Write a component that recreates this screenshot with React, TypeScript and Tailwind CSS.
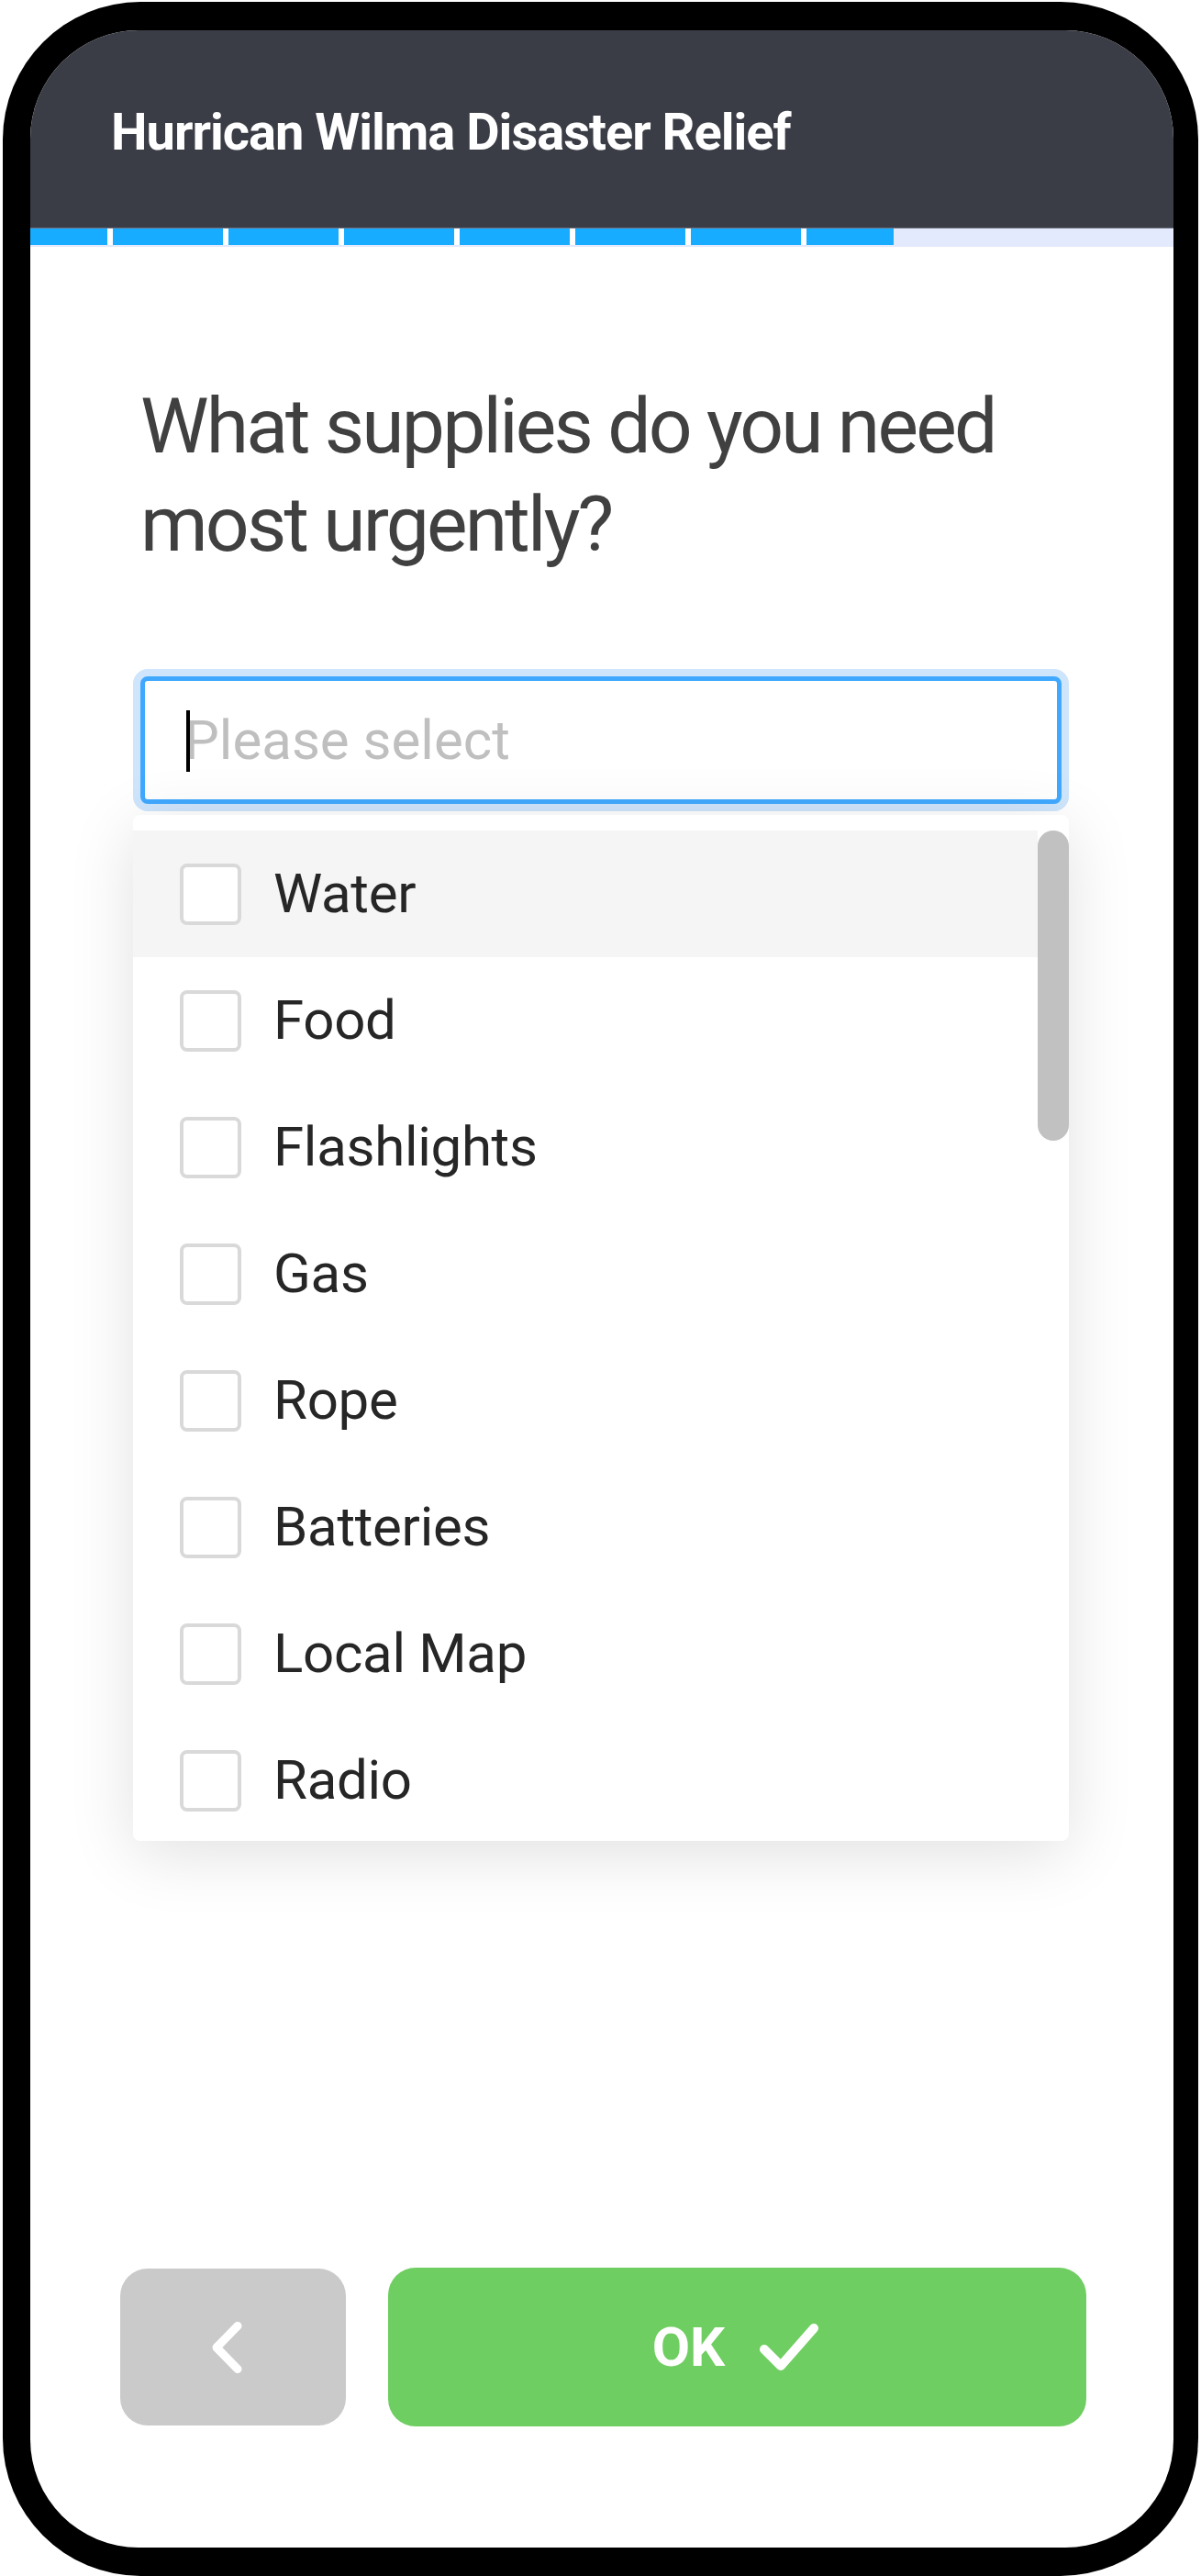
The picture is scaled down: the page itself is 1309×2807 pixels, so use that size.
import React from 'react';

const supplies = ['Water', 'Food', 'Flashlights', 'Gas', 'Rope', 'Batteries', 'Local Map', 'Radio'];

// progress segments: widths of the filled blue pieces, split by white ticks
const segments = [84, 120, 120, 120, 120, 120, 120, 95];

function ChevronLeft() {
  return (
    <svg width="40" height="60" viewBox="0 0 40 60" className="mr-[10px]">
      <path d="M30 6.5 L7 30 L30 53.5" fill="none" stroke="#ffffff" strokeWidth="9" strokeLinecap="round" strokeLinejoin="round" />
    </svg>
  );
}

function CheckMark() {
  return (
    <svg width="72" height="60" viewBox="0 0 72 60">
      <path d="M9 32 L27 50 L63 9" fill="none" stroke="#ffffff" strokeWidth="10" strokeLinecap="round" strokeLinejoin="round" />
    </svg>
  );
}

export default function App() {
  return (
    <div className="w-[1309px] h-[2807px] bg-white pt-[2px] pl-[3px] pr-[3px] font-['Roboto',sans-serif]">
      {/* Phone frame */}
      <div className="h-[2805px] bg-black rounded-[150px] pt-[31px] pb-[31px] pl-[30px] pr-[27px]">
        <div className="h-full bg-white rounded-[118px] overflow-hidden flex flex-col">

          {/* Header */}
          <div className="h-[215px] bg-[#3b3d46] pl-[88px] pt-[78px] shrink-0">
            <h1 className="text-[56px] leading-[66px] font-bold text-white tracking-[-1px]">Hurrican Wilma Disaster Relief</h1>
          </div>

          {/* Progress bar */}
          <div className="h-[21px] bg-[#e4eafd] shrink-0 border-t border-[#6f7481]">
            <div className="flex gap-[6px] bg-white w-[941px] h-[18px]">
              {segments.map((w, i) => (
                <div key={i} className="h-full bg-[#17acff]" style={{ width: w }} />
              ))}
            </div>
          </div>

          {/* Question body */}
          <div className="flex-1 pl-[120px] pr-[122px] pt-[142px]">
            <h2 className="text-[84px] leading-[107px] text-[#404040] font-normal tracking-[-2.8px]">
              What supplies do you need most urgently?
            </h2>

            <div className="mt-[112px] h-[139px] bg-white border-[5px] border-[#40a9ff] rounded-[8px] shadow-[0_0_0_8px_#cfe5fc] flex items-center pl-[43px]">
              <span className="relative text-[60px] leading-[70px] text-[#bfbfbf]">
                <span className="absolute left-[2px] top-[2px] w-[4px] h-[67px] bg-black" />
                Please select
              </span>
            </div>

            {/* Dropdown */}
            <div className="mt-[12px] -mx-[8px] h-[1118px] bg-white rounded-[8px] shadow-[0_14px_72px_rgba(0,0,0,0.12)] pt-[17px] overflow-hidden">
              <div className="flex h-full">
                <div className="flex-1">
                  {supplies.map((s, i) => (
                    <div
                      key={s}
                      className={`h-[138px] flex items-center pl-[51px] gap-[35px] ${i === 0 ? 'bg-[#f5f5f5]' : 'bg-white'}`}
                    >
                      <span className="w-[67px] h-[67px] rounded-[8px] border-[4px] border-[#d9d9d9] bg-white shrink-0" />
                      <span className="text-[60px] leading-[70px] text-[#262626] tracking-[-0.3px]">{s}</span>
                    </div>
                  ))}
                </div>
                <div className="w-[34px] shrink-0">
                  <div className="h-[338px] rounded-full bg-[#c1c1c1]" />
                </div>
              </div>
            </div>
          </div>

          {/* Navigation buttons */}
          <div className="flex items-center gap-[46px] pl-[98px] pr-[95px] mb-[132px] shrink-0">
            <button className="w-[246px] h-[171px] rounded-[30px] bg-[#cacaca] flex items-center justify-center">
              <ChevronLeft />
            </button>
            <button className="flex-1 h-[173px] rounded-[30px] bg-[#6fce61] flex items-center justify-center gap-[34px]">
              <span className="text-[60px] leading-[70px] font-bold text-white">OK</span>
              <CheckMark />
            </button>
          </div>

        </div>
      </div>
    </div>
  );
}
